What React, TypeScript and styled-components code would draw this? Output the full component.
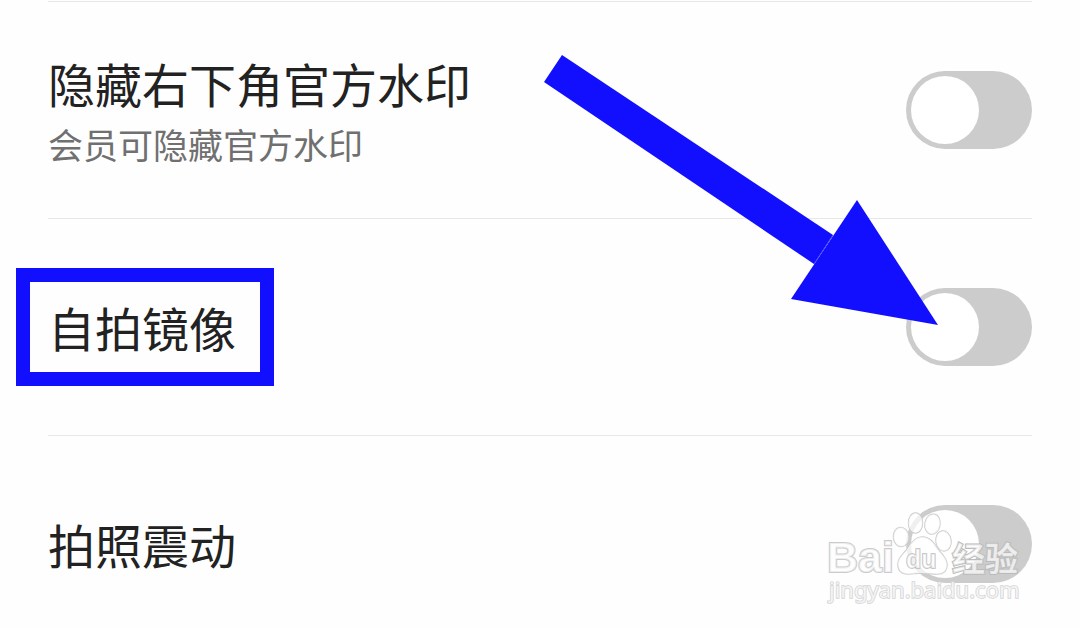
import React from 'react';
import styled, { createGlobalStyle } from 'styled-components';

const GlobalStyle = createGlobalStyle`
  * { box-sizing: border-box; }
  body {
    margin: 0;
    background: #fefefe;
    font-family: "Noto Sans CJK SC", "Noto Sans", sans-serif;
  }
`;

const Page = styled.main`
  position: relative;
  height: 100vh;
  overflow: hidden;
`;

const Settings = styled.ul`
  list-style: none;
  margin: 0;
  padding: 1px 48px 0;
`;

const Row = styled.li`
  display: flex;
  align-items: center;
  justify-content: space-between;
  min-height: 217px;
  border-top: 1px solid #e8e8e8;
`;

const Labels = styled.div`
  display: flex;
  flex-direction: column;
`;

const Title = styled.label`
  position: relative;
  color: #222;
  font-size: 47px;
  line-height: 68px;
`;

const Hint = styled.span`
  color: #707070;
  font-size: 35px;
  line-height: 54px;
`;

const Highlight = styled.span`
  position: absolute;
  inset: -25px -38px -25px -32px;
  border: 14px solid #120fff;
  pointer-events: none;
`;

const Switch = styled.input`
  appearance: none;
  flex: none;
  display: flex;
  align-items: center;
  width: 126px;
  height: 78px;
  margin: 0;
  padding: 0 5px;
  border-radius: 39px;
  background: #ccc;
  cursor: pointer;

  &::before {
    content: "";
    width: 68px;
    height: 68px;
    border-radius: 50%;
    background: #fff;
  }

  &:checked {
    justify-content: flex-end;
    background: #120fff;
  }
`;

const Arrow = styled.svg`
  position: absolute;
  top: 50px;
  right: 140px;
  width: 400px;
  height: 280px;
  pointer-events: none;
`;

const Watermark = styled.svg`
  position: absolute;
  right: 50px;
  bottom: 18px;
  width: 210px;
  height: 110px;
  pointer-events: none;
  paint-order: stroke;
`;

const rows = [
  { id: 'watermark', title: '隐藏右下角官方水印', hint: '会员可隐藏官方水印' },
  { id: 'mirror', title: '自拍镜像', marked: true },
  { id: 'vibrate', title: '拍照震动' },
];

export default function App() {
  return (
    <Page>
      <GlobalStyle />
      <Settings>
        {rows.map((row) => (
          <Row key={row.id}>
            <Labels>
              <Title htmlFor={row.id}>
                {row.title}
                {row.marked && <Highlight />}
              </Title>
              {row.hint && <Hint>{row.hint}</Hint>}
            </Labels>
            <Switch type="checkbox" id={row.id} />
          </Row>
        ))}
      </Settings>

      <Arrow viewBox="540 50 400 280" aria-hidden="true">
        <path d="M562 55 833 235 814 264 544 82Z" fill="#120fff" />
        <path d="M857 200 938 325 791 299Z" fill="#120fff" />
        <path d="M833 235 814 264" stroke="#4a48ff" strokeWidth="1" />
      </Arrow>

      <Watermark viewBox="820 500 210 110" fill="#fff" fillOpacity="0.7" stroke="#cbcbcb" strokeWidth="1.500">
        <ellipse cx="901" cy="537" rx="7.500" ry="9.500" transform="rotate(-5 901 537)" />
        <ellipse cx="915.500" cy="523" rx="7" ry="10" />
        <ellipse cx="932.500" cy="524" rx="7.500" ry="10" transform="rotate(10 932 524)" />
        <ellipse cx="943.500" cy="541" rx="7.500" ry="10" transform="rotate(-8 943 541)" />
        <path d="M922 537C930 537 934 543 937 548C940 553 947 557 947 565C947 571 943 574 937 574C931 574 928 573 922 573C916 573 913 574 908 574C901 574 898 570 898 564C898 557 905 553 908 548C911 543 915 537 922 537Z" />
        <text x="827" y="572" fontFamily="Liberation Sans, sans-serif" fontWeight="700" fontSize="43" strokeWidth="2">Bai</text>
        <text x="906" y="568" fontFamily="Liberation Sans, sans-serif" fontWeight="700" fontSize="25" stroke="#bdbdbd">du</text>
        <text x="952" y="571" fontFamily="Noto Sans CJK SC, sans-serif" fontWeight="700" fontSize="33" stroke="#bbb" strokeWidth="2">经验</text>
        <text x="829" y="598" fontFamily="Noto Sans, sans-serif" fontSize="22" stroke="#d4d4d4">jingyan.baidu.com</text>
      </Watermark>
    </Page>
  );
}
